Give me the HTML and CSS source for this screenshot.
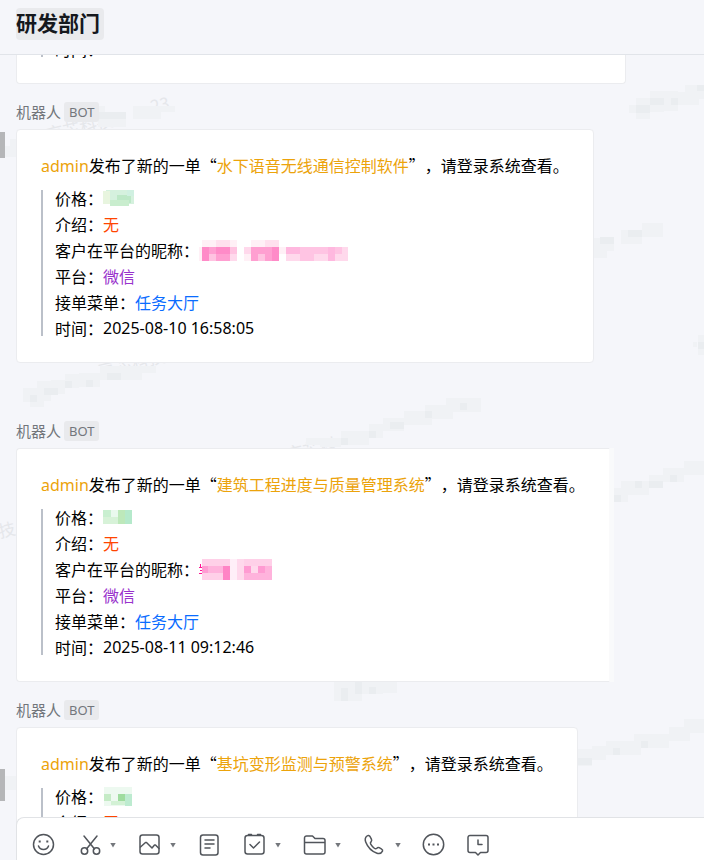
FILE: index.html
```html
<!DOCTYPE html>
<html lang="zh-CN">
<head>
<meta charset="utf-8">
<meta name="viewport" content="width=device-width, initial-scale=1">
<title>研发部门</title>
<link rel="stylesheet" href="styles.css">
</head>
<body>
<header class="header"><h1 class="title">研发部门</h1></header>

<main class="messages">
  <svg class="watermark" width="704" height="763" viewBox="0 55 704 763" aria-hidden="true" shape-rendering="crispEdges">
    <g class="wm-text">
      <text transform="translate(48 141) rotate(-13)">京芯科技</text>
      <text transform="translate(152 113) rotate(-13)">23</text>
      <text transform="translate(100 377) rotate(-13)">京芯科技</text>
      <text transform="translate(288 461) rotate(-13)">京芯科</text>
      <text transform="translate(0 538) rotate(-13)">技</text>
    </g>
    <g class="wm-soft">
      <path d="M98 106h7v21h-7zM98 112h28v15h-28zM133 106h42v6h-42zM133 112h28v7h-28z"/>
      <path d="M5 146h11v11H5zM10 139h6v7h-6zM5 776h11v14H5z"/>
      <path d="M629 105h7v8h-7zM636 98h14v21h-14zM650 91h14v21h-14zM664 91h14v20h-14zM671 92h28v13h-28zM685 85h19v14h-19z"/>
      <path d="M593 238h14v20h-14zM600 237h14v14h-14zM621 230h21v14h-21zM642 223h21v14h-21z"/>
      <path d="M693 342h4v5h-4zM698 335h6v20h-6z"/>
      <path d="M23 388h14v14h-14zM30 395h14v12h-14zM37 381h14v20h-14zM51 380h14v14h-14zM65 374h14v14h-14zM79 373h21v14h-21zM100 366h21v14h-21zM114 366h28v14h-28zM142 366h14v7h-14z"/>
      <path d="M306 438h21v7h-21zM320 438h21v9h-21zM341 431h28v14h-28zM369 424h14v14h-14zM383 418h21v13h-21zM404 411h28v14h-28zM425 405h28v14h-28zM446 398h14v14h-14zM460 398h21v14h-21z"/>
      <path d="M614 488h14v14h-14zM621 481h14v14h-14zM635 481h14v14h-14zM649 475h14v13h-14zM663 468h21v14h-21zM684 461h20v14h-20z"/>
      <path d="M334 682h28v19h-28zM355 682h28v12h-28zM383 682h14v11h-14z"/>
      <path d="M578 749h14v17h-14zM592 746h14v14h-14zM606 741h35v14h-35zM634 734h35v14h-35zM669 727h21v14h-21zM684 719h20v14h-20z"/>
    </g>
    <g class="wm-deep">
      <path d="M98 112h28v7h-28zM636 105h14v8h-14zM650 98h14v7h-14zM671 98h7v7h-7zM697 85h7v6h-7z"/>
      <path d="M600 237h14v7h-14zM628 230h14v7h-14zM698 342h6v7h-6z"/>
      <path d="M30 395h7v7h-7zM44 388h14v7h-14zM65 381h7v7h-7zM86 380h7v7h-7zM107 373h14v7h-14z"/>
      <path d="M341 438h7v7h-7zM369 431h7v7h-7zM390 422h14v7h-14zM425 411h7v7h-7zM460 403h7v7h-7z"/>
      <path d="M614 495h7v7h-7zM635 481h7v7h-7zM649 481h14v7h-14zM670 475h7v7h-7z"/>
      <path d="M341 688h7v13h-7zM355 682h7v12h-7zM369 687h7v7h-7zM578 758h14v7h-14zM613 748h7v7h-7zM641 741h7v7h-7z"/>
    </g>
    <g class="wm-edge">
      <path d="M0 132h5v26h-5zM0 769h5v32h-5z"/>
    </g>
  </svg>

  <div class="card card-tail"><p class="tail">时间：</p></div>

  <section class="message">
    <div class="sender"><span>机器人</span><span class="tag">BOT</span></div>
    <article class="card">
      <p class="subject"><span class="latin gold">admin</span>发布了新的一单“<span class="gold">水下语音无线通信控制软件</span>”，请登录系统查看。</p>
      <div class="detail">
        <p>价格：<svg class="mosaic" width="31" height="16" viewBox="0 0 31 16" aria-hidden="true" shape-rendering="crispEdges"><path fill="#d5f1de" d="M3 0h28v14h-28z"/><path fill="#e8f5df" d="M0 1h7v13H0z"/><path fill="#bde8c7" d="M14 5h14v8H14z"/><path fill="#c9edce" d="M7 10h19v6H7z"/><path fill="#d0f0e1" d="M24 0h7v6h-7z"/></svg></p>
        <p>介绍：<span class="red">无</span></p>
        <p>客户在平台的昵称：<svg class="mosaic" width="149" height="21" viewBox="0 0 149 21" aria-hidden="true" shape-rendering="crispEdges"><path fill="#fff0f6" d="M0 7h3v14H0zM3 0h35v7H3zM45 14h7v7h-7zM52 0h14v7H52zM80 7h7v7h-7z"/><path fill="#ffe0ee" d="M17 0h14v7H17zM66 0h14v7H66z"/><path fill="#ff9fd1" d="M3 7h28v14H3zM52 7h28v14H52z"/><path fill="#ff8bc8" d="M3 7h7v14H3zM17 7h14v7H17zM73 7h7v14h-7z"/><path fill="#ffc3e1" d="M10 14h7v7h-7zM31 7h7v7h-7zM59 14h7v7h-7z"/><path fill="#ffd9ec" d="M31 14h7v7h-7zM45 7h7v7h-7zM87 7h62v14H87z"/><path fill="#ffc4e3" d="M101 7h42v7h-42zM101 14h14v7h-14z"/><path fill="#ffb8df" d="M87 7h14v7H87zM129 7h7v14h-7z"/></svg></p>
        <p>平台：<span class="purple">微信</span></p>
        <p>接单菜单：<a class="link" href="#">任务大厅</a></p>
        <p>时间：<time class="latin">2025-08-10 16:58:05</time></p>
      </div>
    </article>
  </section>

  <section class="message message-later">
    <div class="sender"><span>机器人</span><span class="tag">BOT</span></div>
    <article class="card card-soft">
      <p class="subject"><span class="latin gold">admin</span>发布了新的一单“<span class="gold">建筑工程进度与质量管理系统</span>”，请登录系统查看。</p>
      <div class="detail">
        <p>价格：<svg class="mosaic" width="29" height="14" viewBox="0 0 29 14" aria-hidden="true" shape-rendering="crispEdges"><path fill="#c9efd0" d="M0 0h29v14H0z"/><path fill="#eaf9ee" d="M8 0h7v7H8z"/><path fill="#d7f2d8" d="M0 7h15v7H0z"/><path fill="#bde8ba" d="M15 0h7v14h-7z"/><path fill="#b5e9cb" d="M22 0h7v14h-7z"/></svg></p>
        <p>介绍：<span class="red">无</span></p>
        <p>客户在平台的昵称：<svg class="mosaic" width="73" height="21" viewBox="0 0 73 21" aria-hidden="true" shape-rendering="crispEdges"><path stroke="#ff1493" d="M1 5v3M0 8h4M1 11h3M0 14h4" fill="none"/><path fill="#ffd0e8" d="M3 0h70v21H3z"/><path fill="#ffb3dc" d="M3 7h28v7H3zM45 7h28v14H45z"/><path fill="#ff84c5" d="M24 7h7v14h-7z"/><path fill="#ff9bd2" d="M3 7h6v7H3zM45 7h7v7h-7zM59 7h7v7h-7z"/><path fill="#ffeff8" d="M31 0h7v21h-7z"/><path fill="#ffd9ec" d="M38 0h7v21h-7zM52 7h7v7h-7z"/></svg></p>
        <p>平台：<span class="purple">微信</span></p>
        <p>接单菜单：<a class="link" href="#">任务大厅</a></p>
        <p>时间：<time class="latin">2025-08-11 09:12:46</time></p>
      </div>
    </article>
  </section>

  <section class="message">
    <div class="sender"><span>机器人</span><span class="tag">BOT</span></div>
    <article class="card">
      <p class="subject"><span class="latin gold">admin</span>发布了新的一单“<span class="gold">基坑变形监测与预警系统</span>”，请登录系统查看。</p>
      <div class="detail">
        <p>价格：<svg class="mosaic" width="29" height="20" viewBox="0 0 29 20" aria-hidden="true" shape-rendering="crispEdges"><path fill="#edf9f0" d="M1 1h28v19H1z"/><path fill="#c5ebc6" d="M1 8h7v7H1z"/><path fill="#9fdc9f" d="M15 8h7v7h-7z"/><path fill="#bdebd0" d="M22 8h7v12h-7z"/><path fill="#d3f1d5" d="M8 15h14v4H8z"/></svg></p>
        <p>介绍：<span class="red">无</span></p>
      </div>
    </article>
  </section>
</main>

<footer class="composer">
  <button class="tool" type="button" aria-label="表情"><svg class="icon" viewBox="0 0 24 24"><circle cx="11.500" cy="11.500" r="10"/><path d="M6.500 13c.8 2.200 2.700 3.500 5 3.500s4.200-1.300 5-3.500"/><path class="dot" d="M6.700 7.500h2v2h-2zM14.300 7.500h2v2h-2z"/></svg></button>
  <div class="split">
    <button class="tool" type="button" aria-label="截图"><svg class="icon" viewBox="0 0 24 24"><path d="M7 3 17.500 16M20 3 9.500 16"/><circle cx="7.500" cy="18" r="3.200"/><circle cx="19.500" cy="18" r="3.200"/></svg></button>
    <button class="caret" type="button" aria-label="截图选项"></button>
  </div>
  <div class="split">
    <button class="tool" type="button" aria-label="图片"><svg class="icon" viewBox="0 0 24 24"><rect x="3" y="2" width="19" height="19" rx="2.500"/><path d="m3.500 14 5-4.500 1 0 5.500 5.500 2.500-3 1 0 3.500 3.500"/></svg></button>
    <button class="caret" type="button" aria-label="图片选项"></button>
  </div>
  <button class="tool" type="button" aria-label="文档"><svg class="icon" viewBox="0 0 24 24"><rect x="3.500" y="2" width="17.500" height="20" rx="2.500"/><path d="M8 7h9M8 11h9M8 15h5"/></svg></button>
  <div class="split">
    <button class="tool" type="button" aria-label="任务"><svg class="icon" viewBox="0 0 24 24"><rect x="3" y="2.500" width="19" height="18.500" rx="2.500"/><path d="M6.500 1.500h3M15.500 1.500h3M8 11.500l3.500 3.500 6-6"/></svg></button>
    <button class="caret" type="button" aria-label="任务选项"></button>
  </div>
  <div class="split">
    <button class="tool" type="button" aria-label="文件"><svg class="icon" viewBox="0 0 24 24"><path d="M2.500 10V5A2 2 0 0 1 4.500 3H10.500L13 5.500H21A2 2 0 0 1 23 7.500V19A2 2 0 0 1 21 21H4.500A2 2 0 0 1 2.500 19ZM2.500 9.500H23"/></svg></button>
    <button class="caret" type="button" aria-label="文件选项"></button>
  </div>
  <div class="split">
    <button class="tool" type="button" aria-label="通话"><svg class="icon" viewBox="0 0 24 24"><path d="M5 3C3 4.500 2.800 6.500 3.700 9 6 15 10 18.500 15 20.200c2.500.8 4.500 0 5.500-2 .5-1-.2-1.700-1.200-2.300l-2.100-1.200c-1-.5-1.700-.2-2.400.6-.8.8-1.600.7-2.800-.3C10.500 13.800 9.500 12.500 8.700 11.200c-.6-1-.4-1.600.3-2.300.8-.9.9-1.700.4-2.700L8 3.500C7.200 2.200 6.200 2.100 5 3Z"/></svg></button>
    <button class="caret" type="button" aria-label="通话选项"></button>
  </div>
  <button class="tool" type="button" aria-label="更多"><svg class="icon" viewBox="0 0 24 24"><circle cx="11.500" cy="11.500" r="10.200"/><path class="dot" d="M6 10.500h2v2H6zM10.500 10.500h2v2h-2zM15 10.500h2v2h-2z"/></svg></button>
  <button class="tool" type="button" aria-label="定时发送"><svg class="icon" viewBox="0 0 24 24"><path d="M3 2.500H19A2 2 0 0 1 21 4.500V17.500A2 2 0 0 1 19 19.500H13.500L11 22 8.500 19.500H3A2 2 0 0 1 1 17.500V4.500A2 2 0 0 1 3 2.500ZM11 7V11.500H15"/></svg></button>
</footer>
</body>
</html>
```

FILE: styles.css
```css
* {
  box-sizing: border-box;
}

body {
  margin: 0;
  height: 100vh;
  display: flex;
  flex-direction: column;
  overflow: hidden;
  background: #f5f6fa;
  color: #000;
  font: 16px/26px "Noto Sans CJK SC", sans-serif;
  text-spacing-trim: space-all;
}

h1,
p {
  margin: 0;
}

.latin {
  font-family: "Noto Sans", sans-serif;
  line-height: 16px;
}

.header {
  flex: none;
  display: flex;
  align-items: flex-start;
  height: 55px;
  padding: 8px 16px;
  border-bottom: 1px solid #e1e4e9;
}

.title {
  padding: 0 4px 4px 0;
  border-radius: 4px;
  background: #e9eaed;
  color: #15181d;
  font-size: 21px;
  line-height: 28px;
  font-weight: 700;
}

.messages {
  position: relative;
  flex: 1;
  min-height: 0;
  overflow: hidden;
  padding: 0 16px;
}

.watermark {
  position: absolute;
  top: 0;
  left: 0;
}

.wm-text {
  fill: #e5e7eb;
  font-size: 17px;
}

.wm-soft {
  fill: #f0f2f5;
}

.wm-deep {
  fill: #eaedf0;
}

.wm-edge {
  fill: #b5b6b8;
}

.card {
  position: relative;
  width: fit-content;
  padding: 22px 24px 26px;
  border: 1px solid #ebecef;
  border-radius: 4px;
  background: #fff;
  white-space: nowrap;
}

.card-soft {
  border-right-color: #fafafb;
  border-radius: 4px 0 0 4px;
  box-shadow: 4px 0 #f9fafb;
}

.card-tail {
  display: flex;
  align-items: flex-end;
  width: 610px;
  height: 29px;
  padding: 0 24px 26px;
  border-top: 0;
  border-radius: 0 0 4px 4px;
  overflow: hidden;
}

.tail {
  padding-left: 12px;
  border-left: 2px solid #bbc0c9;
  line-height: 16px;
}

.message {
  margin-top: 18px;
}

.message-later {
  margin-top: 58px;
}

.sender {
  position: relative;
  display: flex;
  align-items: center;
  gap: 3px;
  height: 20px;
  margin-bottom: 7px;
  color: #72767c;
  font-size: 15px;
  line-height: 20px;
}

.tag {
  padding: 0 5px;
  border-radius: 3px;
  background: #e9eaed;
  font-family: "Noto Sans", sans-serif;
  font-size: 13px;
}

.detail {
  display: grid;
  gap: 10px;
  margin-top: 12px;
  padding-left: 12px;
  border-left: 2px solid #bbc0c9;
  line-height: 16px;
}

.detail p {
  display: flex;
  align-items: center;
  height: 16px;
}

.mosaic {
  flex: none;
}

.gold {
  color: #eca30b;
}

.red {
  color: #ff4500;
}

.purple {
  color: #9932cc;
}

.link {
  color: #0a6cff;
  text-decoration: none;
}

.composer {
  position: relative;
  flex: none;
  display: flex;
  align-items: center;
  gap: 21px;
  margin: -8px 0 0 16px;
  padding: 15px 15px 3px;
  border: 1px solid #e1e3e6;
  border-width: 1px 0 0 1px;
  border-radius: 8px 0 0 0;
  background: #fff;
}

.split {
  display: flex;
  align-items: center;
  gap: 7px;
}

.tool,
.caret {
  display: block;
  padding: 0;
  border: 0;
  background: none;
  cursor: pointer;
}

.tool {
  width: 24px;
  height: 24px;
}

.icon {
  display: block;
  width: 24px;
  height: 24px;
  fill: none;
  stroke: #51555b;
  stroke-width: 1.5;
  stroke-linecap: round;
  stroke-linejoin: round;
}

.icon .dot {
  fill: #51555b;
  stroke: none;
}

.caret {
  width: 8px;
  height: 24px;
}

.caret::before {
  content: "";
  display: block;
  width: 6px;
  height: 5px;
  margin-left: 2px;
  background: #74777c;
  clip-path: polygon(0 0, 100% 0, 50% 100%);
}
```
